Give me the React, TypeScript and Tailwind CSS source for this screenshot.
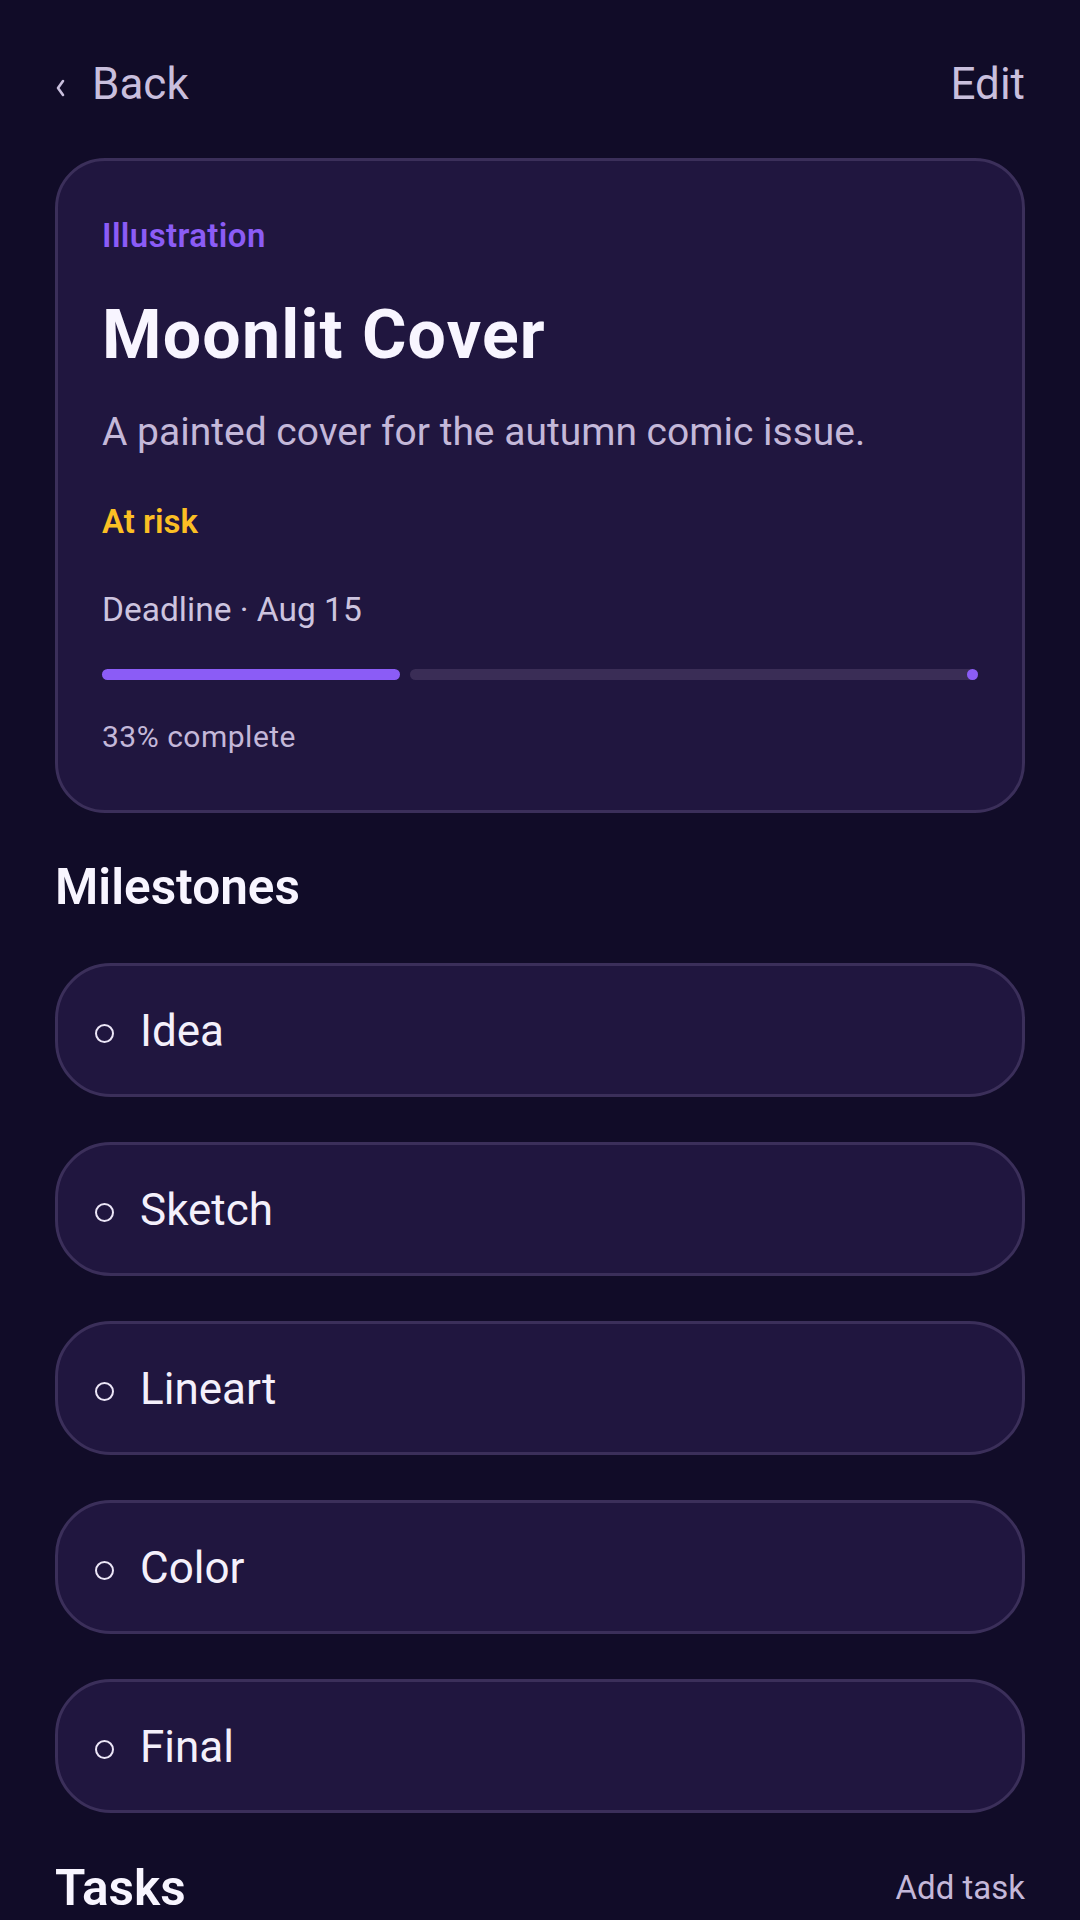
const milestones = ['Idea', 'Sketch', 'Lineart', 'Color', 'Final'];

function ProgressBar({ done }: { done: number }) {
  return (
    <div className="flex h-[11px] w-full items-center gap-[10px]">
      <div className="h-full shrink-0 rounded-full bg-[#8b5cf6]" style={{ width: `${done}px` }} />
      <div className="relative h-full flex-1 rounded-full bg-[#3a2d56]">
        <span className="absolute right-0 top-0 h-[11px] w-[11px] rounded-full bg-[#8b5cf6]" />
      </div>
    </div>
  );
}

function MilestoneRow({ label }: { label: string }) {
  return (
    <div className="flex h-[134px] items-center rounded-[56px] border-[3px] border-[#3b2f5a] bg-[#20163f] pl-[37px]">
      <span className="mt-[6px] h-[19px] w-[19px] rounded-full border-2 border-[#ece6f7]" />
      <span className="ml-[26px] mt-[2px] text-[44px] leading-[52px] text-[#f4f0fb]">{label}</span>
    </div>
  );
}

export default function App() {
  return (
    <div
      className="h-[1920px] w-[1080px] overflow-hidden bg-[#110c28] px-[55px] pt-[58px]"
      style={{ fontFamily: 'Roboto, "Noto Sans", sans-serif' }}
    >
      <header className="flex items-center justify-between text-[44px] leading-[52px] text-[#c9bfdd]">
        <button className="flex items-center">
          <svg width="11" height="18" viewBox="0 0 11 18" className="mt-[7px]">
            <path d="M8 2 L3 9 L8 16" fill="none" stroke="#c9bfdd" strokeWidth="2.6" strokeLinecap="round" strokeLinejoin="round" />
          </svg>
          <span className="ml-[26px]">Back</span>
        </button>
        <button>Edit</button>
      </header>

      <section className="mt-[48px] rounded-[50px] border-[3px] border-[#3b2f5a] bg-[#20163f] px-[44px] pb-[56px] pt-[55px]">
        <p className="text-[33px] font-semibold leading-[40px] tracking-[0.4px] text-[#8b5cf6]">Illustration</p>
        <h1 className="mt-[39px] text-[68px] font-bold leading-[80px] tracking-[1.2px] text-[#f8f5ff]">Moonlit Cover</h1>
        <p className="mt-[34px] text-[39px] leading-[46px] text-[#c4b8d9]">A painted cover for the autumn comic issue.</p>
        <p className="mt-[47px] text-[33px] font-semibold leading-[40px] text-[#fbbf24]">At risk</p>
        <p className="mt-[48px] text-[33.5px] leading-[40px] text-[#cdc4df]">Deadline · Aug 15</p>
        <div className="mt-[39px]">
          <ProgressBar done={298} />
        </div>
        <p className="mt-[40px] text-[30px] leading-[34px] tracking-[0.5px] text-[#c4b8d9]">33% complete</p>
      </section>

      <h2 className="mt-[45px] text-[49.5px] font-semibold leading-[58px] text-[#f8f5ff]">Milestones</h2>
      <div className="mt-[47px] flex flex-col gap-[45px]">
        {milestones.map((m) => (
          <MilestoneRow key={m} label={m} />
        ))}
      </div>

      <div className="mt-[46px] flex items-center justify-between">
        <h2 className="text-[49.5px] font-semibold leading-[58px] text-[#f8f5ff]">Tasks</h2>
        <button className="text-[33px] leading-[38px] text-[#c4b8d9]">Add task</button>
      </div>
    </div>
  );
}
